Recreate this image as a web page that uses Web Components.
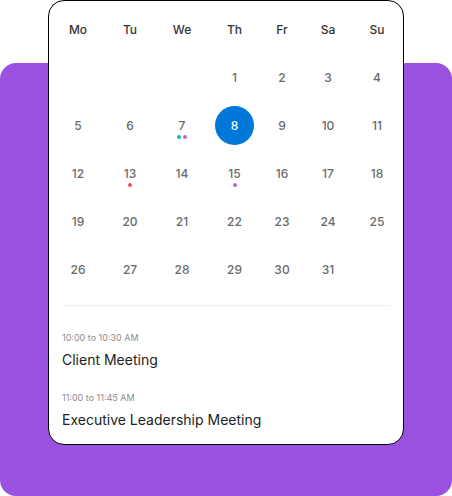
<!DOCTYPE html>
<html lang="en">
<head>
<meta charset="utf-8">
<meta name="viewport" content="width=device-width, initial-scale=1">
<title>Calendar</title>
<style>
body { margin: 0; background: #fff; font-family: Inter, "Liberation Sans", sans-serif; color: #333; }
</style>
</head>
<body>
<calendar-stage>
  <calendar-card>
    <month-grid slot="month"></month-grid>
    <agenda-item time="10:00 to 10:30 AM">Client Meeting</agenda-item>
    <agenda-item time="11:00 to 11:45 AM">Executive Leadership Meeting</agenda-item>
  </calendar-card>
</calendar-stage>
<script>
class Base extends HTMLElement {
  constructor() {
    super();
    this.attachShadow({ mode: "open" });
  }
  connectedCallback() {
    this.shadowRoot.innerHTML = this.render();
  }
}

customElements.define("calendar-stage", class extends Base {
  render() {
    return `<style>
      :host { display: grid; grid-template-columns: minmax(0, 1fr); min-height: 100vh; }
      .panel, main { grid-area: 1 / 1; }
      .panel { margin-top: 63px; border-radius: 16px; background: #9a51e0; }
      main { padding: 0 48px 51px; }
    </style><div class="panel"></div><main><slot></slot></main>`;
  }
});

customElements.define("calendar-card", class extends Base {
  render() {
    return `<style>
      :host { display: block; background: #fff; border: 1px solid #000; border-radius: 16px; padding: 4px 0 12px; }
      .month { padding: 0 2px 0 3px; }
      hr { border: 0; height: 1px; background: #eee; margin: 12px 13px 24px; }
      section { display: flex; flex-direction: column; gap: 18px; padding: 0 13px; }
    </style>
    <div class="month"><slot name="month"></slot></div><hr><section aria-label="Agenda"><slot></slot></section>`;
  }
});

customElements.define("agenda-item", class extends Base {
  render() {
    return `<style>
      :host { display: block; }
      p { margin: 0 0 2px; font-size: 9px; line-height: 16px; color: #8c8c8c; }
      h2 { margin: 0; font-size: 14px; line-height: 24px; font-weight: 400; color: #222; }
    </style><p>${this.getAttribute("time")}</p><h2><slot></slot></h2>`;
  }
});

customElements.define("calendar-day", class extends Base {
  render() {
    const dots = (this.getAttribute("dots") || "").split(" ").filter(Boolean);
    return `<style>
      :host { display: grid; place-items: center; position: relative; height: 48px; }
      button { width: 39px; height: 39px; padding: 0; border: 0; border-radius: 50%; background: none;
        font: 500 12px/39px Inter, "Liberation Sans", sans-serif; color: #6a6a6a; cursor: pointer; }
      :host([selected]) button { background: #0078d9; color: #fff; }
      .dots { position: absolute; inset: auto 0 10px; display: flex; justify-content: center; gap: 2px; pointer-events: none; }
      i { width: 4px; height: 4px; border-radius: 50%; }
      .green { background: #13c296; } .violet { background: #b966dc; } .red { background: #ef5350; }
    </style><button type="button"><slot></slot></button>
    ${dots.length ? `<span class="dots">${dots.map(d => `<i class="${d}"></i>`).join("")}</span>` : ""}`;
  }
});

customElements.define("month-grid", class extends Base {
  render() {
    const names = ["Mo", "Tu", "We", "Th", "Fr", "Sa", "Su"];
    const widths = [52, 52, 52, 53, 42, 50, 48];
    const events = { 7: "green violet", 13: "red", 15: "violet" };
    let rows = "";
    for (let week = 0; week < 5; week++) {
      rows += "<tr>";
      for (let col = 0; col < 7; col++) {
        const n = week * 7 + col - 2;
        rows += n > 0 && n < 32
          ? `<td><calendar-day ${n === 8 ? "selected" : ""} dots="${events[n] || ""}">${n}</calendar-day></td>`
          : "<td></td>";
      }
      rows += "</tr>";
    }
    return `<style>
      :host { display: block; }
      table { width: 100%; table-layout: fixed; border-collapse: collapse; }
      th, td { padding: 0; height: 48px; text-align: center; }
      th { font-size: 12px; font-weight: 500; color: #333; }
    </style><table><colgroup>${widths.map(w => `<col style="width:${w}px">`).join("")}</colgroup>
    <thead><tr>${names.map(n => `<th scope="col">${n}</th>`).join("")}</tr></thead>
    <tbody>${rows}</tbody></table>`;
  }
});
</script>
</body>
</html>
